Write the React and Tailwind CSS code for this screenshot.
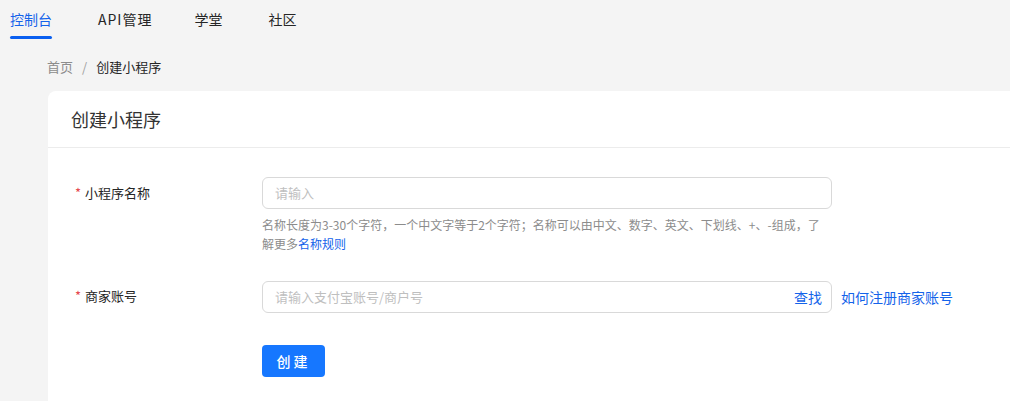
export default function App() {
  const font = { fontFamily: '"Noto Sans CJK SC", "Noto Sans", sans-serif' };
  return (
    <div className="w-[1010px] h-[401px] overflow-hidden bg-[#f4f4f4] text-[#262626]" style={font}>
      <nav className="flex h-[40px] pl-[10px] text-[14px]">
        <div className="relative flex flex-col items-center">
          <span className="leading-[20px] mt-[9px] text-[#1463ea]">控制台</span>
          <span className="absolute left-0 right-0 top-[36px] h-[3px] rounded-full bg-[#0a5ff0]"></span>
        </div>
        <span className="ml-[46px] leading-[20px] mt-[9px] text-[#262626] tracking-[1px]">API管理</span>
        <span className="ml-[42px] leading-[20px] mt-[9px] text-[#262626]">学堂</span>
        <span className="ml-[46px] leading-[20px] mt-[9px] text-[#262626]">社区</span>
      </nav>
      <div className="flex items-center pl-[47px] h-[51px] text-[13px] pt-[2px]">
        <span className="text-[#8c8c8c]">首页</span>
        <span className="mx-[9px] text-[#a0a0a0]">/</span>
        <span className="text-[#262626]">创建小程序</span>
      </div>
      <div className="ml-[48px] bg-white rounded-tl-[8px] h-[310px]">
        <div className="h-[57px] border-b border-[#ececec] flex items-center pl-[23px] pt-[1px] text-[18px] text-[#333]">
          创建小程序
        </div>
        <div className="pt-[29px]">
          <div className="flex">
            <div className="w-[214px] pl-[27px] pt-[6px] text-[13px] leading-[20px]">
              <span className="text-[#e5484d] mr-[4px]">*</span>小程序名称
            </div>
            <div className="w-[570px]">
              <div className="h-[32px] rounded-[6px] border border-[#d9d9d9] flex items-center px-[12px] text-[13px] text-[#bfbfbf]">
                请输入
              </div>
              <div className="mt-[6px] w-[562px] text-[12px] leading-[19px] text-[#8c8c8c]">
                名称长度为3-30个字符，一个中文字等于2个字符；名称可以由中文、数字、英文、下划线、+、-组成，了解更多<span className="text-[#1463ea]">名称规则</span>
              </div>
            </div>
          </div>
          <div className="flex mt-[28px]">
            <div className="w-[214px] pl-[27px] pt-[5px] text-[13px] leading-[20px]">
              <span className="text-[#e5484d] mr-[4px]">*</span>商家账号
            </div>
            <div className="w-[570px] h-[32px] rounded-[6px] border border-[#d9d9d9] flex items-center justify-between pl-[12px] pr-[9px] text-[13px]">
              <span className="text-[#bfbfbf]">请输入支付宝账号/商户号</span>
              <span className="text-[#1463ea] text-[14px]">查找</span>
            </div>
            <div className="ml-[9px] flex items-center h-[32px] text-[14px] text-[#1463ea]">如何注册商家账号</div>
          </div>
          <div className="mt-[32px] pl-[214px]">
            <button className="w-[63px] h-[32px] rounded-[4px] bg-[#1677ff] text-white text-[14px] tracking-[3px] font-medium">创建</button>
          </div>
        </div>
      </div>
    </div>
  );
}
